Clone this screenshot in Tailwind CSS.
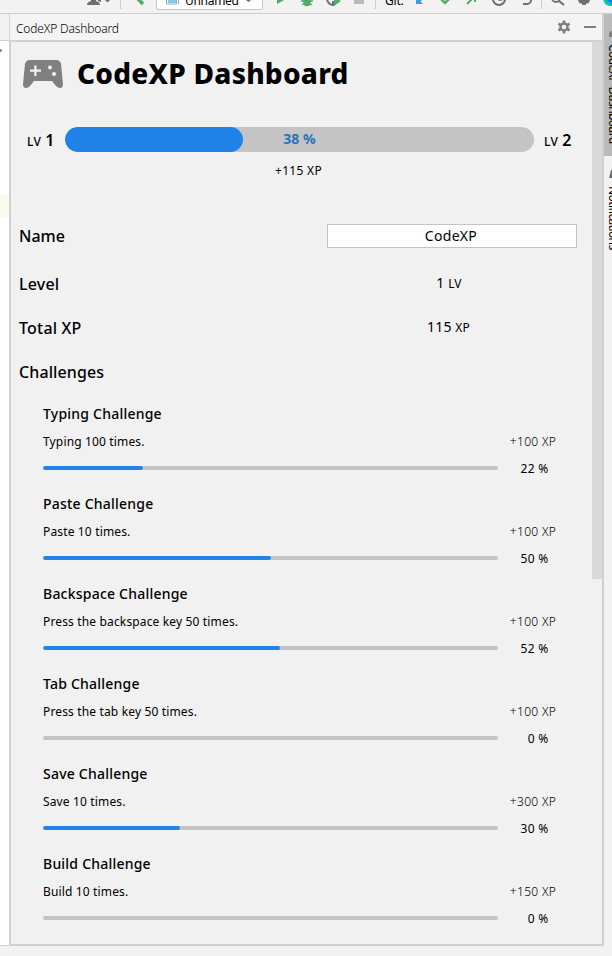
<!DOCTYPE html>
<html lang="en">
<head>
<meta charset="utf-8">
<title>CodeXP Dashboard</title>
<script src="https://cdn.jsdelivr.net/npm/@tailwindcss/browser@4"></script>
</head>
<body class="w-[612px] h-[956px] overflow-hidden bg-[#f2f2f2] text-black font-['Noto_Sans',sans-serif] text-[12px]">
<div class="flex h-[956px] w-[612px] flex-col overflow-hidden">
  <!-- main toolbar -->
  <header class="relative h-[14px] shrink-0 overflow-hidden border-b border-[#cdcdcd]">
    <svg class="absolute inset-0" width="612" height="13" viewBox="0 0 612 13" fill="none">
      <path d="M87 5q0-3 4-4V-2h5v3q4 1 4 4zM97-2h4v4l-3-1z" fill="#6e6e6e"/><path d="M105 0h5l-2.500 2.500z" fill="#6e6e6e"/>
      <path d="M120.500 0v9M375.500 0v9M541.500 0v9" stroke="#cdcdcd"/>
      <path d="M136-3l7 7" stroke="#59a869" stroke-width="3.500"/>
      <rect x="156.500" y="-6.500" width="106" height="16" rx="2" fill="#fff" stroke="#c4c4c4"/>
      <path d="M166.500-3h10v7h-10zM178.500-3v7" stroke="#9aa7b0"/><path d="M168 0h8v3h-8z" fill="#79cdee"/>
      <path d="M246 0h5l-2.500 2z" fill="#6e6e6e"/>
      <path d="M277-6v10l9-5z" fill="#59a869"/>
      <path d="M304-3h6v5a3 3.500 0 0 1-6 0zM301 1h12M302 5l3-2M312 5l-3-2" fill="#59a869" stroke="#59a869" stroke-width="1.500"/>
      <path d="M327 0q2 5 6 5V1" stroke="#6e6e6e" stroke-width="2"/><path d="M334-3v9l7-5z" fill="#59a869"/>
      <path d="M354-5h10v9h-10z" fill="#b9b9b9"/>
      <path d="M416-4v8h7l-2.500-2.500L424-2z" fill="#389fd6"/>
      <path d="M440-2l5 5 5-5" stroke="#59a869" stroke-width="2.500"/>
      <path d="M467 4l7-7M469-1h6v3" stroke="#59a869" stroke-width="2"/>
      <circle cx="499" cy="-1" r="6" stroke="#6e6e6e" stroke-width="2"/><path d="M499-4v4h3" stroke="#6e6e6e" stroke-width="1.500"/>
      <path d="M523 4h4a4 4 0 0 0 4-4v-2" stroke="#6e6e6e" stroke-width="2"/>
      <circle cx="556" cy="-2" r="4" stroke="#6e6e6e" stroke-width="1.800"/><path d="M559 1l5 4" stroke="#6e6e6e" stroke-width="2.200"/>
      <path d="M578 0h12l-1.500 3.500-2-.5-.5 2h-4l-.5-2-2 .5z" fill="#6e6e6e"/>
      <path d="M603-1h9v7q-8 0-9-7z" fill="#07c3b0"/><path d="M606-1l6 5v-5z" fill="#087cfa"/><path d="M603-1l4 7q-3-1-4-7z" fill="#7fe88b"/>
    </svg>
    <span class="absolute left-[185px] top-[-7px] leading-[16px] tracking-[-0.3px]">Unnamed</span>
    <span class="absolute left-[385px] top-[-7px] leading-[16px] tracking-[-0.2px]">Git:</span>
  </header>

  <div class="flex h-[932px] shrink-0">
    <!-- editor edge -->
    <div class="w-[9px] shrink-0">
      <div class="h-[27px] border-b border-[#d0d0d0]"></div>
      <div class="h-[904px] bg-white">
        <div class="h-[8px]"></div>
        <div class="h-[3px] w-[2px] rounded-r bg-[#59a869]"></div>
        <div class="h-[143px]"></div>
        <div class="h-[22px] bg-[#fcfaed]"></div>
      </div>
      <div class="h-[1px] bg-[#d0d0d0]"></div>
    </div>

    <!-- tool window -->
    <section class="flex h-[932px] w-[593px] shrink-0 flex-col">
      <div class="flex h-[28px] shrink-0 items-center border-b-2 border-l border-[#d0d0d0] bg-[#f4f4f4] pl-[6px] pr-[6px]">
        <span class="pt-[3px] font-light tracking-[-0.15px]">CodeXP Dashboard</span>
        <svg class="ml-auto" width="14" height="14" viewBox="0 0 14 14" fill="none" stroke="#7f7f7f"><circle cx="7" cy="7" r="3.500" stroke-width="2.400"/><path d="M7 .5v3M7 10.500v3M1.400 3.700l2.500 1.500M10.100 8.800l2.500 1.500M1.400 10.300l2.500-1.500M10.100 5.200l2.500-1.500" stroke-width="2.600"/></svg>
        <div class="ml-[13px] h-[2px] w-[12px] bg-[#7f7f7f]"></div>
      </div>
      <div class="flex h-[904px] shrink-0 border-b-2 border-l-2 border-[#d0d0d0] bg-[#f1f1f1]">
        <main class="flex h-[902px] w-[581px] shrink-0 flex-col overflow-hidden">
          <div class="flex h-[64px] shrink-0 items-center pl-[11px]">
            <svg width="42" height="30" viewBox="0 0 42 30"><path d="M8 1h26q4 0 5 4l2 20q0 4-3 4-2 0-4-2l-4-5H12l-4 5q-2 2-4 2-3 0-3-4L3 5q1-4 5-4z" fill="#808080"/><path d="M12.300 6.500h2.200v4H19v2.200h-4.500V17h-2.200v-4.300H8v-2.200h4.300z" fill="#f1f1f1"/><circle cx="28" cy="8.500" r="2" fill="#f1f1f1"/><circle cx="32" cy="15" r="2" fill="#f1f1f1"/></svg>
            <h1 class="ml-[13px] whitespace-nowrap pb-[2px] text-[28px] leading-[38px] font-extrabold tracking-[0.25px]">CodeXP Dashboard</h1>
          </div>
          <div class="mt-[21px] flex h-[25px] shrink-0 items-center">
            <div class="flex w-[54px] items-baseline pl-[16px]"><span class="text-[12px] font-medium tracking-[0.4px]">LV</span><span class="ml-[4px] text-[16px] font-semibold">1</span></div>
            <div class="relative flex h-[25px] w-[469px] items-center justify-center overflow-hidden rounded-full bg-[#c4c4c4]">
              <div class="absolute left-0 top-0 h-[25px] rounded-full bg-[#2083e8]" style="width:178px"></div>
              <span class="pb-[2px] text-[14px] font-bold text-[#2675bf]">38 %</span>
            </div>
            <div class="flex items-baseline pl-[10px]"><span class="text-[12px] font-medium tracking-[0.4px]">LV</span><span class="ml-[4px] text-[16px] font-semibold">2</span></div>
          </div>
          <div class="mt-[9px] h-[20px] shrink-0 pl-[54px] pr-[60px] text-center text-[12px] leading-[20px] tracking-[0.3px]">+115 XP</div>
          <div class="mt-[43px] flex h-[24px] shrink-0 items-center pl-[8px]">
            <div class="w-[308px] text-[16px] font-medium">Name</div>
            <div class="h-[24px] w-[250px] border border-[#c4c4c4] bg-white pr-[2px] text-center text-[14px] leading-[22px] tracking-[0.3px]">CodeXP</div>
          </div>
          <div class="mt-[14px] flex h-[44px] shrink-0 items-center pl-[8px]">
            <div class="w-[308px] text-[16px] font-medium tracking-[0.2px]">Level</div>
            <div class="w-[244px] pb-[3px] text-center text-[14px] tracking-[0.1px]">1 <span class="text-[12px]">LV</span></div>
          </div>
          <div class="flex h-[44px] shrink-0 items-center pl-[8px]">
            <div class="w-[308px] text-[16px] font-medium tracking-[0.2px]">Total XP</div>
            <div class="w-[243px] pb-[3px] text-center text-[14px] tracking-[0.15px]">115 <span class="text-[12px]">XP</span></div>
          </div>
          <div class="flex h-[44px] shrink-0 items-center pl-[8px] text-[16px] font-medium tracking-[0.1px]">Challenges</div>
          <div id="challenges" class="flex flex-col pl-[32px] pt-[6px]"></div>
        </main>
        <div class="h-[537px] w-[10px] shrink-0 bg-[#d9d9d9]"></div>
      </div>
    </section>

    <!-- right stripe -->
    <aside class="relative w-[10px] shrink-0 overflow-hidden border-l-2 border-[#d0d0d0]">
      <div class="absolute left-[-1px] top-0 h-[142px] w-[10px] border-l border-[#999] bg-[#bababa]"></div>
      <svg class="absolute left-[5px] top-[16px]" width="3" height="8"><path d="M0 7V4q0-3 3-3v6z" fill="#808080"/></svg>
      <span class="absolute left-[1px] top-[30px] whitespace-nowrap leading-[16px] tracking-[-0.55px] [writing-mode:vertical-rl]">CodeXP Dashboard</span>
      <svg class="absolute left-[5px] top-[155px]" width="3" height="10"><path d="M0 9L2 1h1v8z" fill="#6e6e6e"/></svg>
      <span class="absolute left-[1px] top-[172px] whitespace-nowrap leading-[16px] tracking-[-0.6px] [writing-mode:vertical-rl]">Notifications</span>
    </aside>
  </div>
  <footer class="flex h-[10px] shrink-0"><div class="w-[602px]"></div></footer>
</div>
<script>
const challenges = [
  ['Typing Challenge', 'Typing 100 times.', '+100 XP', 22],
  ['Paste Challenge', 'Paste 10 times.', '+100 XP', 50],
  ['Backspace Challenge', 'Press the backspace key 50 times.', '+100 XP', 52],
  ['Tab Challenge', 'Press the tab key 50 times.', '+100 XP', 0],
  ['Save Challenge', 'Save 10 times.', '+300 XP', 30],
  ['Build Challenge', 'Build 10 times.', '+150 XP', 0]
];
document.getElementById('challenges').innerHTML = challenges.map(([title, text, xp, pct]) => `
  <div class="h-[90px] shrink-0">
    <div class="h-[28px] text-[14px] leading-[28px] font-medium tracking-[0.22px]">${title}</div>
    <div class="flex h-[26px] items-center pt-[2px]"><span class="w-[455px] tracking-[0.15px]">${text}</span><span class="w-[70px] text-center font-light tracking-[0.3px]">${xp}</span></div>
    <div class="flex h-[28px] items-center">
      <div class="h-[4px] w-[455px] overflow-hidden rounded-full bg-[#c4c4c4]"><div class="h-[4px] rounded-full bg-[#2083e8]" style="width:${pct}%"></div></div>
      <span class="w-[50.500px] pt-[1px] text-right tracking-[0.3px]">${pct} %</span>
    </div>
  </div>`).join('');
</script>
</body>
</html>
